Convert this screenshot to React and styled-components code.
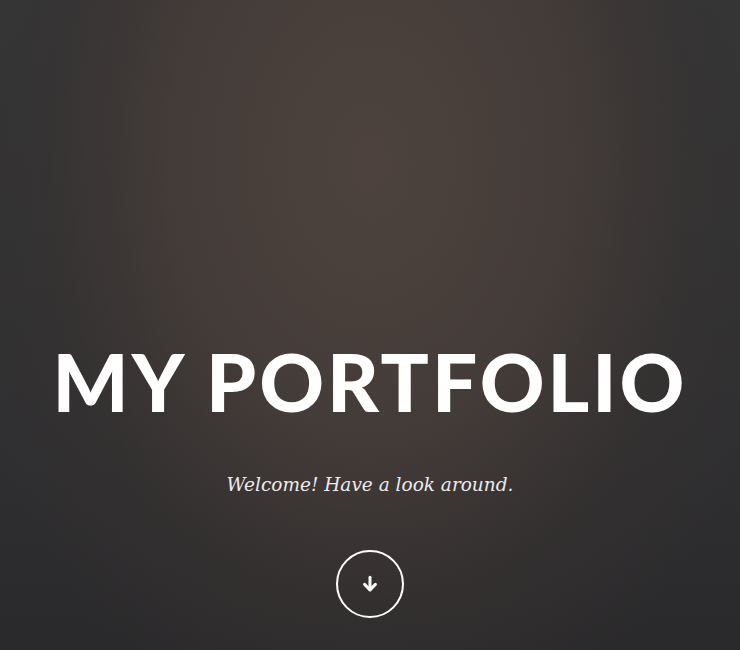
import React from 'react';
import styled, { createGlobalStyle } from 'styled-components';

const GlobalStyle = createGlobalStyle`
  html, body {
    margin: 0;
    padding: 0;
    background: #2c2b2c;
  }
`;

function App() {
  return (
    <>
      <GlobalStyle />
      <Hero>
        <Title>MY PORTFOLIO</Title>
        <Tagline>Welcome! Have a look around.</Tagline>
        <ScrollButton href="#about" aria-label="Scroll down">
          <svg width="20" height="20" viewBox="0 0 24 24" fill="none" stroke="#fff" strokeWidth="3.6" strokeLinecap="round" strokeLinejoin="round">
            <path d="M12 4v15" />
            <path d="M5.5 12.5 12 19l6.5-6.5" />
          </svg>
        </ScrollButton>
      </Hero>
    </>
  );
}

const Hero = styled.header`
  height: 650px;
  box-sizing: border-box;
  display: flex;
  flex-direction: column;
  align-items: center;
  padding-top: 336px;
  background:
    radial-gradient(ellipse 430px 600px at 50% 25%, rgba(77, 66, 61, 1) 0%, rgba(71, 62, 58, 0.92) 40%, rgba(55, 50, 49, 0.6) 75%, rgba(44, 43, 44, 0) 100%),
    linear-gradient(180deg, #343638 0%, #303032 60%, #2a292b 100%);
  overflow: hidden;
`;

const Title = styled.h1`
  margin: 0;
  font-family: 'Lato', 'Open Sans', sans-serif;
  font-weight: 900;
  font-size: 80px;
  line-height: 90px;
  letter-spacing: 3px;
  color: #ffffff;
  white-space: nowrap;
`;

const Tagline = styled.p`
  margin: 48px 0 0;
  font-family: 'DejaVu Serif', 'Liberation Serif', serif;
  font-style: italic;
  font-size: 18.5px;
  color: #ececec;
`;

const ScrollButton = styled.a`
  margin-top: 55px;
  width: 64px;
  height: 64px;
  border: 2px solid #ffffff;
  border-radius: 50%;
  display: flex;
  align-items: center;
  justify-content: center;
`;

export default App;
